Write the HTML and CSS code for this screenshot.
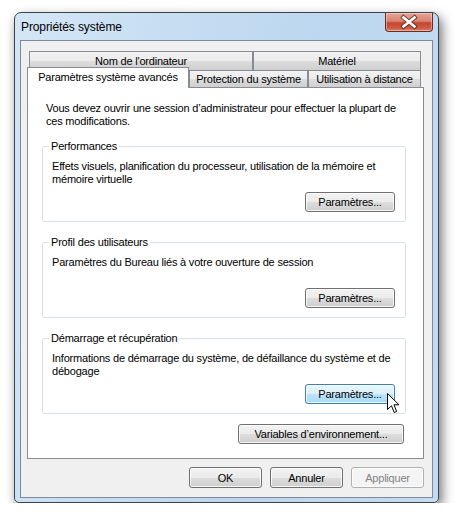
FILE: index.html
```html
<!DOCTYPE html>
<html>
<head>
    <meta charset="utf-8">
    <title>Propriétés système</title>
    <link rel="stylesheet" href="styles.css">
</head>
<body>
    <div class="win">
        <div class="titlebar">
            <span class="title">Propriétés système</span>
            <span class="close">
                <svg width="46" height="18" viewBox="0 0 46 18">
                    <path d="M17.5 4.5 L28.5 13.5 M28.5 4.5 L17.5 13.5" stroke="#5a2318" stroke-width="4.6" stroke-linecap="square" fill="none" opacity="0.75"/>
                    <path d="M17.5 4.5 L28.5 13.5 M28.5 4.5 L17.5 13.5" stroke="#fff" stroke-width="2.6" stroke-linecap="square" fill="none"/>
                </svg>
            </span>
        </div>
        <div class="client">
            <div class="tabs">
                <div class="row r1">
                    <span class="t w1">Nom de l'ordinateur</span><span class="t w2">Matériel</span>
                </div>
                <div class="row r2">
                    <span class="t on w3">Paramètres système avancés</span><span class="t w4">Protection du système</span><span class="t w5">Utilisation à distance</span>
                </div>
            </div>
            <div class="panel">
                <p class="intro">Vous devez ouvrir une session d’administrateur pour effectuer la plupart de ces modifications.</p>

                <fieldset class="grp">
                    <legend>Performances</legend>
                    <div class="desc">Effets visuels, planification du processeur, utilisation de la mémoire et mémoire virtuelle</div>
                    <div class="act"><button class="btn">Paramètres...</button></div>
                </fieldset>

                <fieldset class="grp">
                    <legend>Profil des utilisateurs</legend>
                    <div class="desc">Paramètres du Bureau liés à votre ouverture de session</div>
                    <div class="act"><button class="btn">Paramètres...</button></div>
                </fieldset>

                <fieldset class="grp">
                    <legend>Démarrage et récupération</legend>
                    <div class="desc">Informations de démarrage du système, de défaillance du système et de débogage</div>
                    <div class="act"><button class="btn hot">Paramètres...</button></div>
                </fieldset>

                <div class="env"><button class="btn wide">Variables d’environnement...</button></div>
            </div>
            <div class="foot">
                <button class="btn sm">OK</button>
                <button class="btn sm">Annuler</button>
                <button class="btn sm off">Appliquer</button>
            </div>
        </div>
    </div>

    <svg class="cursor" width="13" height="21" viewBox="0 0 13 21">
        <path d="M0.5 0.5 L0.5 16.5 L4.5 12.8 L7.2 19.5 L9.6 18.5 L7 11.8 L12 11.8 Z" fill="#fff" stroke="#000" stroke-width="1" stroke-linejoin="miter"/>
    </svg>
</body>
</html>
```

FILE: styles.css
```css
body { margin: 0; background: #fff; font-family: "Liberation Sans", Arial, sans-serif; font-size: 11px; letter-spacing: -0.2px; color: #000; }

.win { width: 425px; height: 491px; margin: 12px 0 0 14px; box-sizing: border-box; border: 1px solid #3b4249; border-radius: 7px 7px 5px 5px; padding: 0 5px 4px; display: flex; flex-direction: column;
    background: linear-gradient(100deg, #d3e6f6 0%, #c7def2 30%, #bcd7ef 60%, #c4dcf1 100%);
    box-shadow: 3px 5px 12px rgba(0, 0, 0, .55); }

.titlebar { height: 27px; display: flex; justify-content: space-between; align-items: flex-start; }
.title { padding: 7px 0 0 1px; line-height: 14px; font-size: 12px; letter-spacing: -0.1px; }
.close { width: 48px; height: 19px; box-sizing: border-box; border: 1px solid #6b2c22; border-top: 0; border-radius: 0 0 4px 4px; display: flex; align-items: center; justify-content: center;
    background: linear-gradient(#e6a596 0%, #d98372 45%, #c5462f 55%, #cf5d45 85%, #dc8a74 100%);
    box-shadow: inset 0 0 0 1px rgba(255, 255, 255, .35); }

.client { flex: 1; background: #f0f0f0; border: 1px solid #7b8b9b; padding: 10px 8px 9px 6px; display: flex; flex-direction: column; }

.tabs { height: 36px; }
.row { display: flex; }
.r1 { height: 19px; margin-left: 2px; }
.r2 { height: 17px; align-items: flex-end; }
.t { box-sizing: border-box; display: block; text-align: center; border: 1px solid #898c95; line-height: 16px; white-space: nowrap;
    background: linear-gradient(#f2f2f2 0%, #ebebeb 50%, #dddddd 51%, #cfcfcf 100%); }
.r1 .t { height: 19px; border-bottom: 0; line-height: 18px; }
.r2 .t { height: 17px; border-bottom: 0; }
.t.on { height: 21px; margin-bottom: -1px; background: #fff; position: relative; z-index: 1; line-height: 18px; }
.w1 { width: 224px; }
.w2 { width: 168px; }
.w3 { width: 162px; }
.w4 { width: 119px; }
.w5 { width: 113px; }

.panel { flex: 1; background: #fff; border: 1px solid #898c95; padding: 14px 0 0 0; }
.intro { margin: 0 20px 11px 18px; line-height: 13px; }

.grp { margin: 0 17px 13px 14px; border: 1px solid #d5dfe5; border-radius: 3px; padding: 7px 10px 9px 6px; }
.grp legend { padding: 0 2px; line-height: 14px; }
.desc { margin-left: 3px; min-height: 26px; line-height: 13px; }
.act { display: flex; justify-content: flex-end; margin-top: 6px; }

.btn { font: inherit; letter-spacing: inherit; color: #000; box-sizing: border-box; width: 90px; height: 20px; padding: 0; border: 1px solid #707070; border-radius: 3px;
    background: linear-gradient(#f2f2f2 0%, #ebebeb 50%, #dddddd 51%, #cfcfcf 100%);
    box-shadow: inset 0 0 0 1px rgba(255, 255, 255, .8); }
.btn.hot { border-color: #3c7fb1; background: linear-gradient(#eaf6fd 0%, #d9f0fc 50%, #bee6fd 51%, #a7d9f5 100%); }
.btn.wide { width: 166px; }
.btn.sm { width: 73px; height: 21px; margin-left: 8px; }
.btn.off { color: #838383; border-color: #adb2b5; background: #f4f4f4; }

.env { display: flex; justify-content: flex-end; margin: -3px 19px 0 0; }

.foot { display: flex; justify-content: flex-end; margin-top: 8px; }

.cursor { position: absolute; left: 387px; top: 393px; }
```
